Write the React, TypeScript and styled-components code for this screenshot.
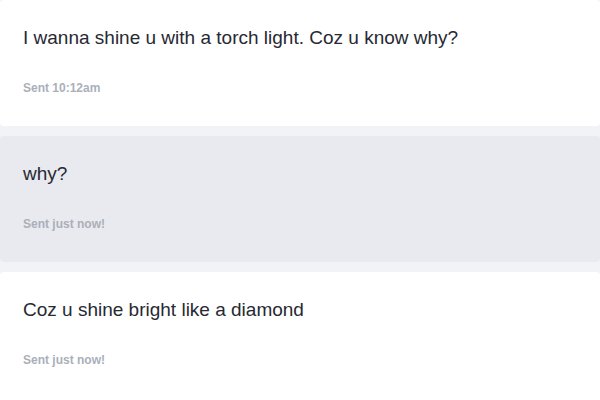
import styled, { createGlobalStyle } from 'styled-components'

const GlobalStyle = createGlobalStyle`
    html, body {
        margin: 0;
        padding: 0;
        background-color: #f2f3f7;
    }

    body {
        font-family: 'Liberation Sans', Arial, sans-serif;
    }
`

type Message = {
    text: string
    sent: string
    mine?: boolean
}

const messages: Message[] = [
    { text: 'I wanna shine u with a torch light. Coz u know why?', sent: 'Sent 10:12am' },
    { text: 'why?', sent: 'Sent just now!', mine: true },
    { text: 'Coz u shine bright like a diamond', sent: 'Sent just now!' },
]

const App = () => {
    return (
        <>
            <GlobalStyle />
            <Thread>
                {messages.map((msg, i) => (
                    <Bubble key={i} $mine={msg.mine}>
                        <Text>{msg.text}</Text>
                        <Meta>{msg.sent}</Meta>
                    </Bubble>
                ))}
            </Thread>
        </>
    )
}

const Thread = styled.div`
    display: flex;
    flex-direction: column;
    gap: 10px;
    width: 600px;
    height: 400px;
    overflow: hidden;
    background-color: #f2f3f7;
`

const Bubble = styled.div<{ $mine?: boolean }>`
    flex-shrink: 0;
    box-sizing: border-box;
    height: 126px;
    padding: 26px 23px 0;
    border-radius: 4px;
    background-color: ${({ $mine }) => ($mine ? '#e9eaef' : '#ffffff')};

    &:last-child {
        height: 140px;
    }
`

const Text = styled.p`
    margin: 0;
    font-size: 19px;
    line-height: 24px;
    color: #272933;
`

const Meta = styled.p`
    margin: 30px 0 0;
    font-size: 12px;
    line-height: 16px;
    font-weight: 700;
    color: #abafba;
`

export default App
